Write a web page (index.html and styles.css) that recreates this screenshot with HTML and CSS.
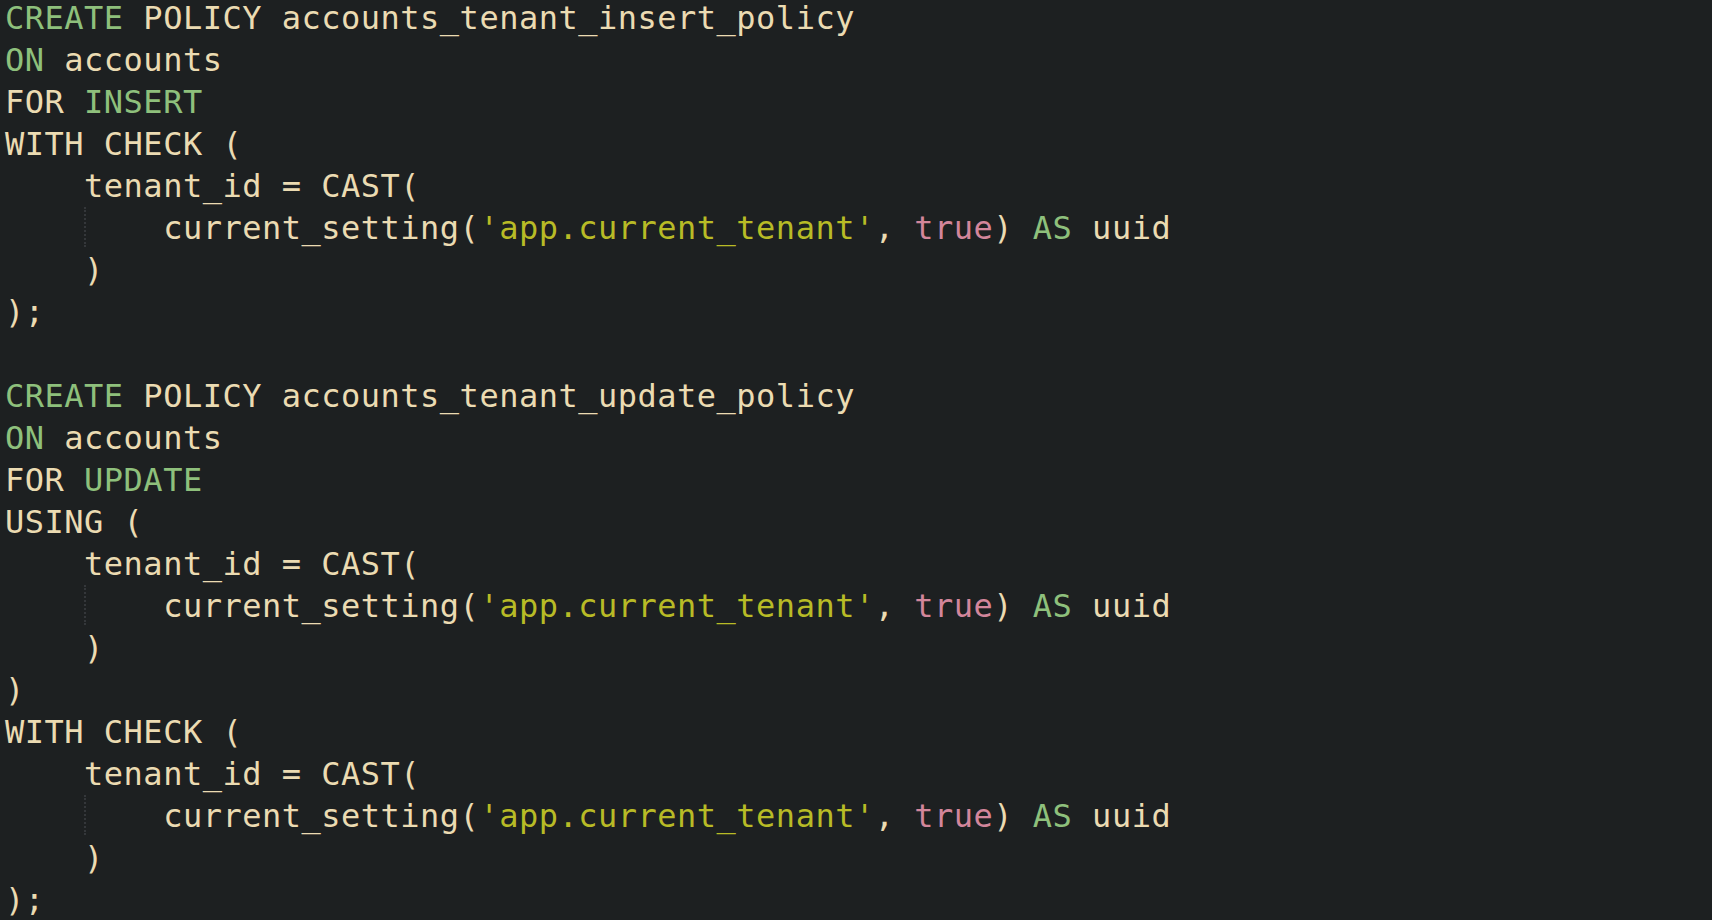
FILE: index.html
```html
<!DOCTYPE html>
<html>
<head>
<meta charset="utf-8">
<link rel="stylesheet" href="styles.css">
</head>
<body>
<pre class="code"><span class="kw">CREATE</span> POLICY accounts_tenant_insert_policy
<span class="kw">ON</span> accounts
FOR <span class="kw">INSERT</span>
WITH CHECK (
    tenant_id = CAST(
    <span class="guide"></span>    current_setting(<span class="str">'app.current_tenant'</span>, <span class="bool">true</span>) <span class="kw">AS</span> uuid
    )
);

<span class="kw">CREATE</span> POLICY accounts_tenant_update_policy
<span class="kw">ON</span> accounts
FOR <span class="kw">UPDATE</span>
USING (
    tenant_id = CAST(
    <span class="guide"></span>    current_setting(<span class="str">'app.current_tenant'</span>, <span class="bool">true</span>) <span class="kw">AS</span> uuid
    )
)
WITH CHECK (
    tenant_id = CAST(
    <span class="guide"></span>    current_setting(<span class="str">'app.current_tenant'</span>, <span class="bool">true</span>) <span class="kw">AS</span> uuid
    )
);</pre>
</body>
</html>
```

FILE: styles.css
```css
html, body {
  margin: 0;
  padding: 0;
  background: #1d2021;
  height: 100%;
  overflow: hidden;
}

.code {
  margin: -3px 0 0 0;
  padding: 0 0 0 5px;
  font-family: "DejaVu Sans Mono", "Liberation Mono", monospace;
  font-size: 32px;
  letter-spacing: 0.5px;
  line-height: 42px;
  color: #ebdbb2;
  white-space: pre;
}

.kw { color: #8ec07c; }
.str { color: #b8bb26; }
.bool { color: #d3869b; }

.guide {
  display: inline-block;
  width: 0;
  height: 40px;
  vertical-align: top;
  border-left: 2px dotted #34373a;
  margin-right: -2px;
}
```
